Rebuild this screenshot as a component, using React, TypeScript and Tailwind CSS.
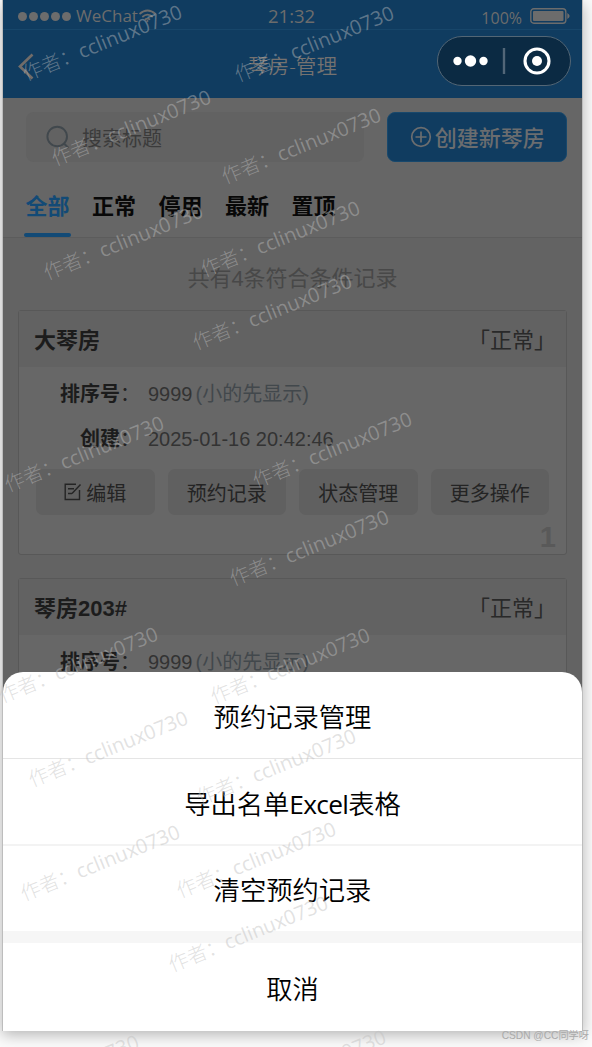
import React from "react";

const page = "font-['Liberation_Sans','Noto_Sans_CJK_SC',sans-serif]";
const chrome = "font-['Open_Sans','Noto_Sans_CJK_SC',sans-serif]";

const marks: [number, number][] = [
  [27, 84], [239, 85], [56, 169], [226, 187], [48, 283], [205, 280], [197, 353],
  [9, 495], [257, 491], [234, 589], [3, 706], [215, 707], [33, 790], [201, 808],
  [25, 904], [181, 901], [173, 975], [-16, 1114], [231, 1109],
];

function StatusBar() {
  return (
    <div className="flex h-[30px] shrink-0 items-center border-b border-[#17466a] pl-[15px] pr-[11px] pt-[3px]">
      <div className="flex w-[244px] items-center">
        <div className="flex gap-[2px]">
          {[0, 1, 2, 3, 4].map((i) => (
            <span key={i} className="h-[9px] w-[9px] rounded-full bg-[#6c6c6c]" />
          ))}
        </div>
        <span className="ml-[5px] text-[17px] leading-[24px]">WeChat</span>
        <svg width="19" height="14" viewBox="0 0 18 14" fill="none" stroke="currentColor" strokeWidth="1.7">
          <path d="M1 5Q9-2 17 5M3.8 8Q9 3.4 14.2 8M6.4 10.6Q9 8.6 11.6 10.6" />
          <circle cx="9" cy="12" r="1" fill="currentColor" stroke="none" />
        </svg>
      </div>
      <span className="ml-[6px] text-[18.500px] leading-[24px]">21:32</span>
      <span className="ml-auto mt-[3px] text-[16px] leading-[24px]">100%</span>
      <svg className="ml-[8px]" width="41" height="16" viewBox="0 0 41 16">
        <rect x="0.8" y="0.8" width="35" height="14.4" rx="3" fill="none" stroke="currentColor" strokeWidth="1.4" />
        <rect x="3" y="3" width="30.5" height="10" rx="1" fill="currentColor" />
        <path d="M37.3 5Q42 8 37.3 11Z" fill="currentColor" />
      </svg>
    </div>
  );
}

function NavBar() {
  return (
    <div className="relative flex h-[68px] shrink-0 items-center justify-center">
      <svg className="absolute left-[14px] top-[23px]" width="18" height="28" viewBox="0 0 18 28" fill="none" stroke="#716c69" strokeWidth="2.7">
        <path d="M15.5 1.5 3 13.5 15.5 25.5" />
      </svg>
      <span className="pt-[4px] text-[20.600px] font-[350] leading-[24px] text-[#757270]">琴房-管理</span>
      <div className="absolute right-[11px] top-[6px] flex h-[50px] w-[134px] items-center rounded-full border border-[#536675] bg-[#0b2a43]">
        <svg width="132" height="48" viewBox="0 0 132 48">
          <g fill="#fff">
            <circle cx="19.500" cy="24" r="4.2" />
            <circle cx="32.500" cy="24" r="5.7" />
            <circle cx="45.500" cy="24" r="4.2" />
            <circle cx="99" cy="24" r="5" />
          </g>
          <path d="M66 11V37" stroke="#526678" strokeWidth="2.4" />
          <circle cx="99" cy="24" r="12" fill="none" stroke="#fff" strokeWidth="3.1" />
        </svg>
      </div>
    </div>
  );
}

function Toolbar() {
  return (
    <div className="mt-[14px] flex h-[50px] shrink-0 pl-[23px] pr-[15px] text-[22px]">
      <div className="flex w-[339px] items-center rounded-[8px] bg-[#626262] pl-[20px] text-[20px] text-[#3b3b3b]">
        <svg width="24" height="24" viewBox="0 0 24 24" fill="none" stroke="#41484d" strokeWidth="1.9">
          <circle cx="11.200" cy="11.500" r="9.800" />
          <path d="m17.500 18 5 5" />
        </svg>
        <span className="ml-[12px] pt-[4px] leading-[30px]">搜索标题</span>
      </div>
      <div className="ml-[23px] flex w-[180px] items-center justify-center rounded-[8px] border border-[#18486c] bg-[#103c60] font-medium text-[#6b6d6f]">
        <svg className="mr-[3px]" width="22" height="22" viewBox="0 0 22 22" fill="none" stroke="currentColor" strokeWidth="1.7">
          <circle cx="11" cy="11" r="9.300" />
          <path d="M11 5.500v11M5.500 11h11" />
        </svg>
        <span className="pt-[3px] leading-[30px]">创建新琴房</span>
      </div>
    </div>
  );
}

function Tabs() {
  return (
    <div className="flex h-[76px] shrink-0 items-end gap-[19.500px] border-b border-[#5c5c5c] pl-[21px] text-[22px] font-bold text-[#080808]">
      {["全部", "正常", "停用", "最新", "置顶"].map((t, i) => (
        <div
          key={t}
          className={
            i === 0
              ? "relative h-[47px] w-[47px] text-center leading-[34px] text-[#124a76]"
              : "h-[47px] w-[47px] text-center leading-[34px]"
          }
        >
          {t}
          {i === 0 && <span className="absolute bottom-0 left-0 h-[4px] w-full rounded-[2px] bg-[#124a76]" />}
        </div>
      ))}
    </div>
  );
}

function Row({ label, children }: { label: string; children: React.ReactNode }) {
  return (
    <div className="flex h-[44.500px] items-center">
      <span className="w-[101px] text-right font-bold text-[#1c1c1c]">{label}</span>
      <span className="w-[28px] text-[#242424]">：</span>
      {children}
    </div>
  );
}

function Card({ title, index }: { title: string; index: number }) {
  return (
    <div className="mx-[15px] flex h-[245px] shrink-0 flex-col rounded-[3px] border border-[#585858] bg-[#676767] text-[20px] leading-[30px] text-[#333]">
      <div className="flex h-[56px] items-center justify-between bg-[#626262] pl-[15px] pr-[21px] pt-[3px] text-[22px]">
        <span className="font-bold text-[#1c1c1c]">{title}</span>
        <span className="text-[#292929] [font-feature-settings:'halt']">「正常」</span>
      </div>
      <div className="pt-[5px]">
        <Row label="排序号">
          <span>9999</span>
          <span className="ml-[3px] text-[#42484c]">(小的先显示)</span>
        </Row>
        <Row label="创建">
          <span>2025-01-16 20:42:46</span>
        </Row>
      </div>
      <div className="mt-[8px] flex gap-[13px] px-[17px] text-[#242424]">
        {["编辑", "预约记录", "状态管理", "更多操作"].map((t, i) => (
          <div key={t} className="flex h-[46px] flex-1 items-center justify-center rounded-[7px] bg-[#606060] pt-[4px]">
            {i === 0 && (
              <svg className="mr-[3px] mt-[-5px]" width="19" height="19" viewBox="0 0 19 19" fill="none" stroke="currentColor" strokeWidth="1.400">
                <path d="M12 2.200H1.200V17.500H15.500V8M4 6.800H10M4 11.500H8M8 11.500 16.500 2.500" />
              </svg>
            )}
            {t}
          </div>
        ))}
      </div>
      <div className="mt-[6px] pr-[10px] text-right text-[29px] font-bold leading-[32px] text-[#595959]">{index}</div>
    </div>
  );
}

function ActionSheet() {
  return (
    <div className="absolute bottom-0 left-0 flex h-[359px] w-full flex-col overflow-hidden rounded-t-[20px] bg-white text-center text-[26.300px] font-[350] text-black">
      <div className="h-[87px] border-b border-[#e5e5e5] leading-[90px]">预约记录管理</div>
      <div className="h-[87px] border-b-2 border-[#f3f3f3] leading-[90px]">导出名单<span className="font-normal tracking-[-0.700px]">Excel</span>表格</div>
      <div className="h-[85px] leading-[88px]">清空预约记录</div>
      <div className="h-[12px] bg-[#f6f6f6]" />
      <div className="h-[88px] leading-[92px]">取消</div>
    </div>
  );
}

export default function App() {
  return (
    <div className={`relative h-[1047px] w-[592px] overflow-hidden bg-[#fbfbfb] pl-[2px] ${chrome}`}>
      <div className="relative flex h-[1031px] w-[581px] flex-col overflow-hidden border-x border-[#bdbdbd] bg-[#666] text-[#6c6c6c] shadow-[0_4px_14px_rgba(0,0,0,0.28)]">
        <div className="shrink-0 bg-[#103c60]">
          <StatusBar />
          <NavBar />
        </div>
        <div className={`flex flex-1 flex-col ${page}`}>
          <Toolbar />
          <Tabs />
          <div className="flex flex-1 flex-col bg-[#636363]">
            <div className="h-[72px] shrink-0 pt-[25px] text-center text-[22px] leading-[32px] text-[#484848]">共有4条符合条件记录</div>
            <Card title="大琴房" index={1} />
            <div className="h-[23px] shrink-0" />
            <Card title="琴房203#" index={2} />
          </div>
        </div>
        <ActionSheet />
      </div>
      <div className="pointer-events-none absolute inset-0">
        {marks.map(([x, y]) => (
          <span
            key={`${x}-${y}`}
            className="absolute origin-bottom-left -rotate-[22deg] whitespace-nowrap font-['Open_Sans','Noto_Sans_CJK_SC',sans-serif] text-[20px] leading-[20px] text-[#bebebe]/45"
            style={{ left: x, top: y - 20 }}
          >
            <span className="font-light">作者：</span>cclinux0730
          </span>
        ))}
      </div>
      <div className="absolute bottom-[3px] right-[3px] whitespace-nowrap font-['Liberation_Sans','Noto_Sans_CJK_SC',sans-serif] text-[10.200px] leading-[16px] text-[#aaa]">CSDN @CC同学呀</div>
    </div>
  );
}
